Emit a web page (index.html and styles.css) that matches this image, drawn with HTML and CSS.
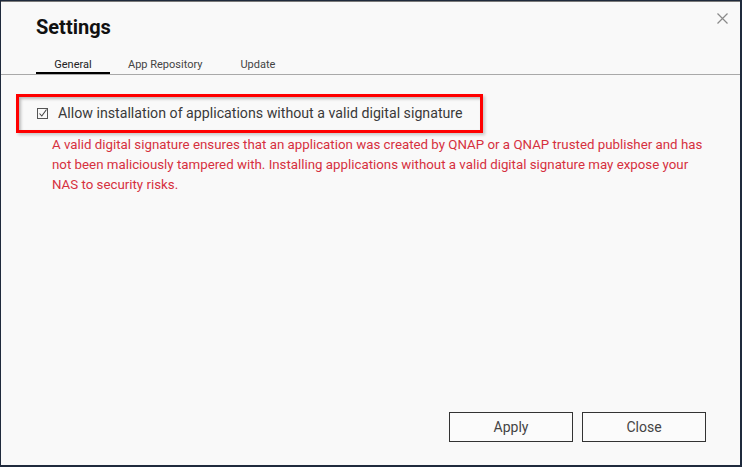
FILE: index.html
```html
<!DOCTYPE html>
<html lang="en">
<head>
    <meta charset="UTF-8">
    <title>Settings</title>
    <link rel="stylesheet" href="styles.css">
</head>
<body>
    <div class="dialog">
        <div class="header">
            <h1>Settings</h1>
            <button class="close-x" aria-label="Close">
                <svg width="11" height="11" viewBox="0 0 11 11"><path d="M0.5 0.5 L10.5 10.5 M10.5 0.5 L0.5 10.5" stroke="#8a8a8a" stroke-width="1.2" fill="none"/></svg>
            </button>
        </div>

        <div class="tabs">
            <div class="tab active">General</div>
            <div class="tab">App Repository</div>
            <div class="tab">Update</div>
        </div>

        <div class="content">
            <div class="highlight">
                <label class="option">
                    <span class="box">
                        <svg width="11" height="11" viewBox="0 0 11 11"><path d="M2.5 5.5 L4.8 8 L9.5 1.5" stroke="#444" stroke-width="1.1" fill="none"/></svg>
                    </span>
                    Allow installation of applications without a valid digital signature
                </label>
            </div>
            <p class="warning">A valid digital signature ensures that an application was created by QNAP or a QNAP trusted publisher and has not been maliciously tampered with. Installing applications without a valid digital signature may expose your NAS to security risks.</p>
        </div>

        <div class="footer">
            <button class="btn">Apply</button>
            <button class="btn">Close</button>
        </div>
    </div>
</body>
</html>
```

FILE: styles.css
```css
* {
    margin: 0;
    padding: 0;
    box-sizing: border-box;
}

body {
    width: 742px;
    height: 467px;
    background-color: #1f2a3c;
    font-family: Roboto, "Noto Sans", Arial, sans-serif;
    overflow: hidden;
    padding: 1px 2px 2px 1px;
}

.dialog {
    width: 739px;
    height: 464px;
    background-color: #f9f9f9;
    border-top: 1px solid #7a7a7a;
    display: flex;
    flex-direction: column;
}

.header {
    display: flex;
    justify-content: space-between;
    padding: 13px 12px 0 35px;
    height: 53px;
}

.header h1 {
    font-size: 20px;
    font-weight: 700;
    color: #111;
    line-height: 24px;
}

.close-x {
    background: none;
    border: none;
    width: 11px;
    height: 11px;
    margin-top: -3px;
}

.tabs {
    display: flex;
    padding-left: 35px;
    border-bottom: 1px solid #a9a9a9;
}

.tab {
    font-size: 11px;
    color: #444;
    line-height: 16px;
    padding: 2px 0 0;
    height: 19px;
    text-align: center;
    margin-right: 38px;
}

.tab.active {
    width: 74px;
    color: #222;
    border-bottom: 2px solid #000;
    margin-right: 18px;
}

.content {
    flex: 1;
    padding: 19px 0 0 15px;
}

.highlight {
    width: 467px;
    height: 39px;
    border: 3px solid #f00;
    box-shadow: inset 2px 2px 3px rgba(0, 0, 0, 0.25), 2px 2px 3px rgba(0, 0, 0, 0.2);
    display: flex;
    align-items: center;
    padding-left: 18px;
}

.option {
    display: flex;
    align-items: center;
    font-size: 14.2px;
    color: #3a3a3a;
    margin-top: -1px;
}

.box {
    width: 11px;
    height: 11px;
    border: 1px solid #555;
    display: flex;
    align-items: center;
    justify-content: center;
    margin-right: 10px;
}

.box svg {
    flex: none;
}

.warning {
    margin: 2px 0 0 36px;
    width: 660px;
    font-size: 13.3px;
    line-height: 20px;
    color: #d6303e;
}

.footer {
    display: flex;
    justify-content: flex-end;
    gap: 9px;
    padding: 0 34px 23px 0;
}

.btn {
    width: 124px;
    height: 30px;
    background-color: #fbfbfb;
    border: 1px solid #333;
    font-family: Roboto, "Noto Sans", Arial, sans-serif;
    font-size: 14px;
    color: #444;
}
```
